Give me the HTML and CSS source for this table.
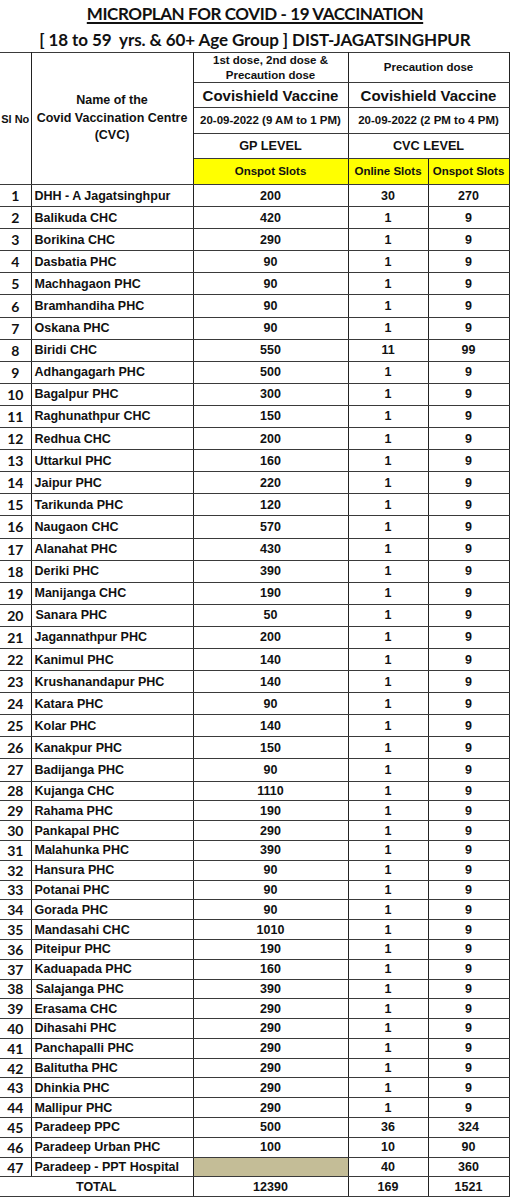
FILE: index.html
```html
<!DOCTYPE html>
<html>
<head>
<meta charset="utf-8">
<link rel="stylesheet" href="styles.css">
</head>
<body>
<div class="sheet">
  <div class="title t1"><span class="ul">MICROPLAN FOR COVID - 19 VACCINATION</span></div>
  <div class="title t2">[ 18 to 59&nbsp; yrs. &amp; 60+ Age Group ] DIST-JAGATSINGHPUR</div>
  <table class="plan">
    <colgroup>
      <col class="c-sl"><col class="c-name"><col class="c-gp"><col class="c-on"><col class="c-sp">
    </colgroup>
    <thead>
      <tr class="h1">
        <th rowspan="5" class="slh">Sl No</th>
        <th rowspan="5" class="nameh">Name of the<br>Covid Vaccination Centre<br>(CVC)</th>
        <th class="sm">1st dose, 2nd dose &amp;<br>Precaution dose</th>
        <th colspan="2" class="sm">Precaution dose</th>
      </tr>
      <tr class="h2">
        <th class="big">Covishield Vaccine</th>
        <th colspan="2" class="big">Covishield Vaccine</th>
      </tr>
      <tr class="h3">
        <th class="sm">20-09-2022 (9 AM to 1 PM)</th>
        <th colspan="2" class="sm">20-09-2022 (2 PM to 4 PM)</th>
      </tr>
      <tr class="h4">
        <th class="lvl">GP LEVEL</th>
        <th colspan="2" class="lvl">CVC LEVEL</th>
      </tr>
      <tr class="h5">
        <th class="sm yl">Onspot Slots</th>
        <th class="sm yl">Online Slots</th>
        <th class="sm yl">Onspot Slots</th>
      </tr>
    </thead>
    <tbody>
      <tr class="r"><td class="sl">1</td><td class="nm">DHH - A Jagatsinghpur</td><td>200</td><td>30</td><td>270</td></tr>
      <tr class="r"><td class="sl">2</td><td class="nm">Balikuda CHC</td><td>420</td><td>1</td><td>9</td></tr>
      <tr class="r"><td class="sl">3</td><td class="nm">Borikina CHC</td><td>290</td><td>1</td><td>9</td></tr>
      <tr class="r"><td class="sl">4</td><td class="nm">Dasbatia PHC</td><td>90</td><td>1</td><td>9</td></tr>
      <tr class="r"><td class="sl">5</td><td class="nm">Machhagaon PHC</td><td>90</td><td>1</td><td>9</td></tr>
      <tr class="r"><td class="sl">6</td><td class="nm">Bramhandiha PHC</td><td>90</td><td>1</td><td>9</td></tr>
      <tr class="r"><td class="sl">7</td><td class="nm">Oskana PHC</td><td>90</td><td>1</td><td>9</td></tr>
      <tr class="r"><td class="sl">8</td><td class="nm">Biridi CHC</td><td>550</td><td>11</td><td>99</td></tr>
      <tr class="r"><td class="sl">9</td><td class="nm">Adhangagarh PHC</td><td>500</td><td>1</td><td>9</td></tr>
      <tr class="r"><td class="sl">10</td><td class="nm">Bagalpur PHC</td><td>300</td><td>1</td><td>9</td></tr>
      <tr class="r"><td class="sl">11</td><td class="nm">Raghunathpur CHC</td><td>150</td><td>1</td><td>9</td></tr>
      <tr class="r"><td class="sl">12</td><td class="nm">Redhua CHC</td><td>200</td><td>1</td><td>9</td></tr>
      <tr class="r"><td class="sl">13</td><td class="nm">Uttarkul PHC</td><td>160</td><td>1</td><td>9</td></tr>
      <tr class="r"><td class="sl">14</td><td class="nm">Jaipur PHC</td><td>220</td><td>1</td><td>9</td></tr>
      <tr class="r"><td class="sl">15</td><td class="nm">Tarikunda PHC</td><td>120</td><td>1</td><td>9</td></tr>
      <tr class="r"><td class="sl">16</td><td class="nm">Naugaon CHC</td><td>570</td><td>1</td><td>9</td></tr>
      <tr class="r"><td class="sl">17</td><td class="nm">Alanahat PHC</td><td>430</td><td>1</td><td>9</td></tr>
      <tr class="r"><td class="sl">18</td><td class="nm">Deriki PHC</td><td>390</td><td>1</td><td>9</td></tr>
      <tr class="r"><td class="sl">19</td><td class="nm">Manijanga CHC</td><td>190</td><td>1</td><td>9</td></tr>
      <tr class="r"><td class="sl">20</td><td class="nm ind">Sanara PHC</td><td>50</td><td>1</td><td>9</td></tr>
      <tr class="r"><td class="sl">21</td><td class="nm">Jagannathpur PHC</td><td>200</td><td>1</td><td>9</td></tr>
      <tr class="r"><td class="sl">22</td><td class="nm">Kanimul PHC</td><td>140</td><td>1</td><td>9</td></tr>
      <tr class="r"><td class="sl">23</td><td class="nm">Krushanandapur PHC</td><td>140</td><td>1</td><td>9</td></tr>
      <tr class="r"><td class="sl">24</td><td class="nm">Katara PHC</td><td>90</td><td>1</td><td>9</td></tr>
      <tr class="r"><td class="sl">25</td><td class="nm">Kolar PHC</td><td>140</td><td>1</td><td>9</td></tr>
      <tr class="r"><td class="sl">26</td><td class="nm">Kanakpur PHC</td><td>150</td><td>1</td><td>9</td></tr>
      <tr class="r"><td class="sl">27</td><td class="nm">Badijanga PHC</td><td>90</td><td>1</td><td>9</td></tr>
      <tr class="s"><td class="sl">28</td><td class="nm">Kujanga CHC</td><td>1110</td><td>1</td><td>9</td></tr>
      <tr class="s"><td class="sl">29</td><td class="nm">Rahama PHC</td><td>190</td><td>1</td><td>9</td></tr>
      <tr class="s"><td class="sl">30</td><td class="nm">Pankapal PHC</td><td>290</td><td>1</td><td>9</td></tr>
      <tr class="s"><td class="sl">31</td><td class="nm">Malahunka PHC</td><td>390</td><td>1</td><td>9</td></tr>
      <tr class="s"><td class="sl">32</td><td class="nm">Hansura PHC</td><td>90</td><td>1</td><td>9</td></tr>
      <tr class="s"><td class="sl">33</td><td class="nm">Potanai PHC</td><td>90</td><td>1</td><td>9</td></tr>
      <tr class="s"><td class="sl">34</td><td class="nm">Gorada PHC</td><td>90</td><td>1</td><td>9</td></tr>
      <tr class="s"><td class="sl">35</td><td class="nm">Mandasahi CHC</td><td>1010</td><td>1</td><td>9</td></tr>
      <tr class="s"><td class="sl">36</td><td class="nm">Piteipur PHC</td><td>190</td><td>1</td><td>9</td></tr>
      <tr class="s"><td class="sl">37</td><td class="nm">Kaduapada PHC</td><td>160</td><td>1</td><td>9</td></tr>
      <tr class="s"><td class="sl">38</td><td class="nm ind">Salajanga PHC</td><td>390</td><td>1</td><td>9</td></tr>
      <tr class="s"><td class="sl">39</td><td class="nm">Erasama CHC</td><td>290</td><td>1</td><td>9</td></tr>
      <tr class="s"><td class="sl">40</td><td class="nm">Dihasahi PHC</td><td>290</td><td>1</td><td>9</td></tr>
      <tr class="s"><td class="sl">41</td><td class="nm">Panchapalli PHC</td><td>290</td><td>1</td><td>9</td></tr>
      <tr class="s"><td class="sl">42</td><td class="nm">Balitutha PHC</td><td>290</td><td>1</td><td>9</td></tr>
      <tr class="s"><td class="sl">43</td><td class="nm">Dhinkia PHC</td><td>290</td><td>1</td><td>9</td></tr>
      <tr class="s"><td class="sl">44</td><td class="nm">Mallipur PHC</td><td>290</td><td>1</td><td>9</td></tr>
      <tr class="s"><td class="sl">45</td><td class="nm">Paradeep PPC</td><td>500</td><td>36</td><td>324</td></tr>
      <tr class="s"><td class="sl">46</td><td class="nm">Paradeep Urban PHC</td><td>100</td><td>10</td><td>90</td></tr>
      <tr class="s"><td class="sl">47</td><td class="nm">Paradeep - PPT Hospital</td><td class="tan"></td><td>40</td><td>360</td></tr>
      <tr class="tot"><td colspan="2">TOTAL</td><td>12390</td><td>169</td><td>1521</td></tr>
    </tbody>
  </table>
</div>
</body>
</html>
```

FILE: styles.css
```css
html, body {
  margin: 0;
  padding: 0;
  background: #ffffff;
}

.sheet {
  width: 510px;
  color: #111111;
}

.title {
  font-family: "Lato", "Liberation Sans", sans-serif;
  font-weight: 700;
  text-align: center;
  white-space: pre;
}

.t1 {
  height: 27px;
  line-height: 28px;
  font-size: 17px;
  letter-spacing: -0.4px;
}

.ul {
  text-decoration: underline;
  text-decoration-thickness: 1.5px;
  text-underline-offset: 2px;
}

.t2 {
  height: 25px;
  line-height: 25px;
  font-size: 17px;
  letter-spacing: -0.1px;
}

.plan {
  border-collapse: collapse;
  table-layout: fixed;
  width: 509px;
  font-family: "Liberation Sans", Arial, sans-serif;
  font-weight: 700;
  font-size: 12.5px;
}

.c-sl { width: 31px; }
.c-name { width: 162px; }
.c-gp { width: 155px; }
.c-on { width: 80px; }
.c-sp { width: 81px; }

.plan th,
.plan td {
  border: 1px solid #3a3a3a;
  border-left-color: #222222;
  border-right-color: #222222;
  padding: 0;
  text-align: center;
  vertical-align: middle;
  overflow: hidden;
  white-space: nowrap;
}

.plan tr > :first-child {
  border-left: none;
}

.plan th {
  font-weight: 700;
}

.h1 { height: 30px; }
.h2 { height: 25px; }
.h3 { height: 26px; }
.h4 { height: 25px; }
.h5 { height: 26px; }

.slh {
  font-size: 11px;
}

.nameh {
  font-size: 12.5px;
  line-height: 17.5px;
}

.sm {
  font-size: 11.5px;
  line-height: 14.5px;
}

.big {
  font-size: 15px;
}

.lvl {
  font-size: 12.7px;
}

.yl {
  background: #ffff00;
}

.r { height: 22.1px; }
.s { height: 19.8px; }
.tot { height: 20px; }

.plan td.sl {
  font-family: "Lato", "Liberation Sans", sans-serif;
  font-size: 14px;
}

.plan td.nm {
  text-align: left;
  padding-left: 3px;
}

.plan td.ind {
  padding-left: 4px;
}

.plan td.tan {
  background: #c4bd97;
}
```
